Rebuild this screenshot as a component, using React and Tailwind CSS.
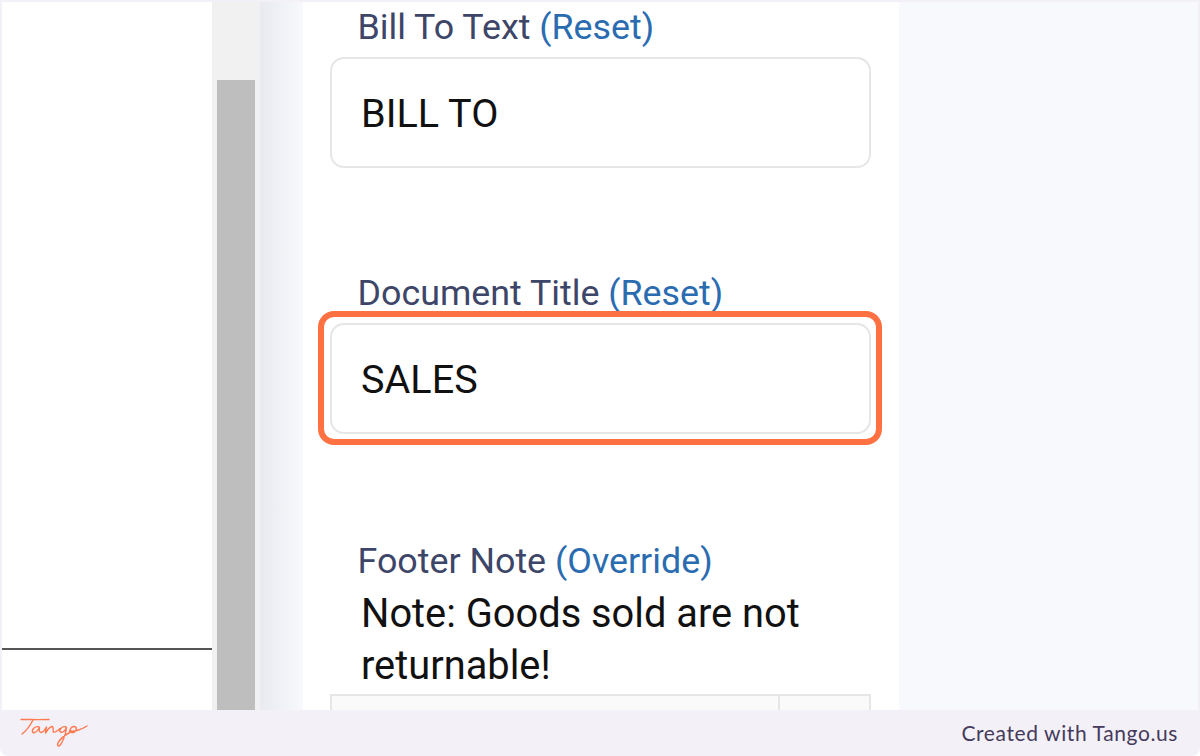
import React from "react";

const roboto = "font-['Roboto',sans-serif]";

function Field_Label({ label, action }) {
  return (
    <div className={`${roboto} pl-[54.5px] text-[35.8px] leading-[41px] text-[#3d4668] whitespace-nowrap`}>
      {label} <span className="text-[#2b6cb0]">({action})</span>
    </div>
  );
}

function Text_Box({ value, children }) {
  return (
    <div className={`${roboto} relative mx-[27px] flex h-[111px] items-center rounded-[14px] border-2 border-[#e6e6e6] bg-white pl-[29px] pt-[2px] text-[39.6px] text-[#111111]`}>
      {value}
      {children}
    </div>
  );
}

function Tango_Logo() {
  return (
    <svg width="72" height="32" viewBox="0 0 72 32" fill="none" stroke="#ff7a50" strokeWidth="1.4" strokeLinecap="round" strokeLinejoin="round">
      <path d="M1 2.5C9 2.5 20 2.8 29 2.5" />
      <path d="M13 3C10 9 6 14 2 17" />
      <path d="M19 10C15 8.5 11 13 13 15.5C15 16.5 18 13 19.5 10.5C19 13 19 15 21 15.5C23 15.5 25 12.5 26.5 10C26 12 25.5 14 25.5 16C27.5 13 29 10 32 9.5C34 9.5 32.5 13.5 33.5 15C35.5 15.5 38 13.5 40 11.5" />
      <path d="M46 10C42 8.5 38.5 13 40.5 15C42.5 16 45 13.5 46.5 10.5C46 15 44.5 21 41 27C39 30 36.5 29.5 38 26C40 22 45 18 50 15.5C49 13 51 9.5 54 9.5C57 9.5 57 13.5 54.5 15C52.5 16 50 15.5 50 13.5C53 15 60 13.5 67 9" />
    </svg>
  );
}

export default function App() {
  return (
    <div className="flex h-[756px] w-[1200px] flex-col overflow-hidden rounded-b-lg bg-[#f3f1f7]">
      <div className="mx-[2px] mt-[2px] flex h-[708px] bg-[#f8f9fd]">
        {/* invoice preview, cut off */}
        <div className="flex w-[210px] flex-col bg-white pt-[646px]">
          <div className="h-[2px] bg-[#555555]"></div>
        </div>

        {/* scrollbar */}
        <div className="flex w-[48px] flex-col bg-[#f1f1f1] pl-[5px] pr-[5px] pt-[78px]">
          <div className="flex-1 bg-[#bebebe]"></div>
        </div>

        {/* shadow next to the panel */}
        <div className="w-[43px] bg-gradient-to-r from-[#e9eaef] to-[#f8f9fd]"></div>

        <div className="h-[708px] w-[596px] overflow-hidden bg-white pt-[5px]">
          <Field_Label label="Bill To Text" action="Reset" />
          <div className="mt-[9px]">
            <div className="w-[595px]">
              <Text_Box value="BILL TO" />
            </div>
          </div>

          <div className="mt-[105px]">
            <Field_Label label="Document Title" action="Reset" />
          </div>
          <div className="mt-[9px] w-[595px]">
            <Text_Box value="SALES">
              <div className="absolute -left-[14px] -right-[13px] -top-[14px] -bottom-[13px] rounded-[16px] border-[6px] border-[#ff7043]"></div>
            </Text_Box>
          </div>

          <div className="mt-[107px]">
            <Field_Label label="Footer Note" action="Override" />
          </div>
          <div className={`${roboto} mt-[6px] pl-[58px] pr-[90px] text-[39.8px] leading-[52px] text-[#111111]`}>
            Note: Goods sold are not returnable!
          </div>

          <div className="ml-[27px] mt-[2px] flex h-[40px] w-[541px] border-2 border-[#e6e6e6] bg-[#fafafa]">
            <div className="w-[448px] border-r-2 border-[#e6e6e6]"></div>
            <div className="flex-1"></div>
          </div>
        </div>
      </div>

      <div className="flex h-[46px] items-center justify-between pl-[20px] pr-[22px]">
        <Tango_Logo />
        <span className="font-['Lato',sans-serif] text-[21px] tracking-[0.6px] text-[#453a5c]">
          Created with Tango.us
        </span>
      </div>
    </div>
  );
}
